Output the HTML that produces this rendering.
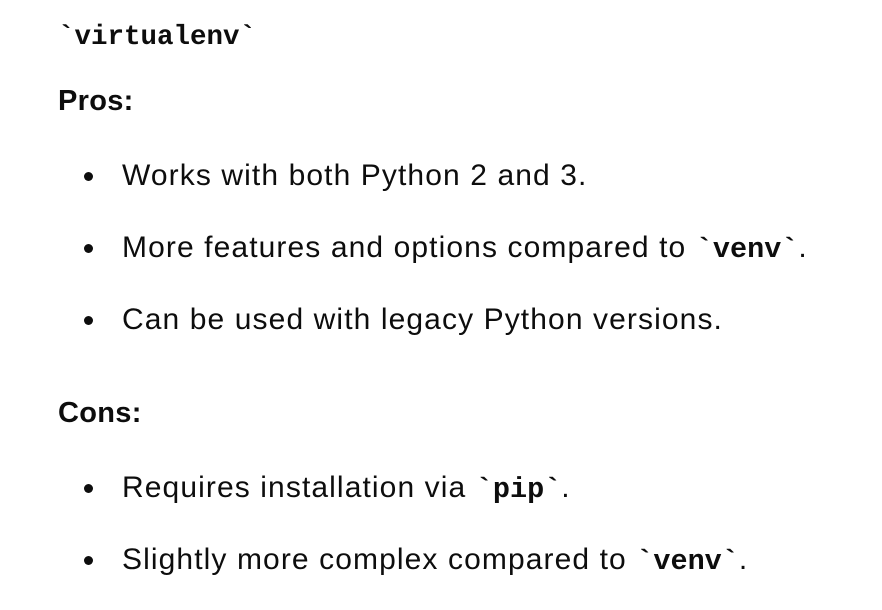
<!DOCTYPE html>
<html><head><style>
body{margin:0;background:#fff;width:882px;height:610px;overflow:hidden;font-family:"Liberation Sans",sans-serif;color:#0d0d0d;}
.t{position:absolute;white-space:nowrap;font-size:30px;line-height:1;letter-spacing:1.1px;}
.b{font-weight:bold;font-size:29px;letter-spacing:0.3px;}
code{font-family:"Liberation Mono",monospace;font-weight:bold;font-size:28.5px;letter-spacing:0;}
.dot{position:absolute;width:9px;height:9px;border-radius:50%;background:#0d0d0d;}
</style></head><body>
<div class="t" style="left:58px;top:20px;"><code style="font-size:27.5px">`virtualenv`</code></div>
<div class="t b" style="left:58px;top:87px;">Pros:</div>
<div class="dot" style="left:84px;top:172px"></div>
<div class="t" style="left:122px;top:161px;">Works with both Python 2 and 3.</div>
<div class="dot" style="left:84px;top:244px"></div>
<div class="t" style="left:122px;top:233px;">More features and options compared to <code>`venv`</code>.</div>
<div class="dot" style="left:84px;top:316px"></div>
<div class="t" style="left:122px;top:305px;">Can be used with legacy Python versions.</div>
<div class="t b" style="left:58px;top:399px;">Cons:</div>
<div class="dot" style="left:84px;top:484px"></div>
<div class="t" style="left:122px;top:473px;">Requires installation via <code>`pip`</code>.</div>
<div class="dot" style="left:84px;top:556px"></div>
<div class="t" style="left:122px;top:545px;">Slightly more complex compared to <code>`venv`</code>.</div>
</body></html>
